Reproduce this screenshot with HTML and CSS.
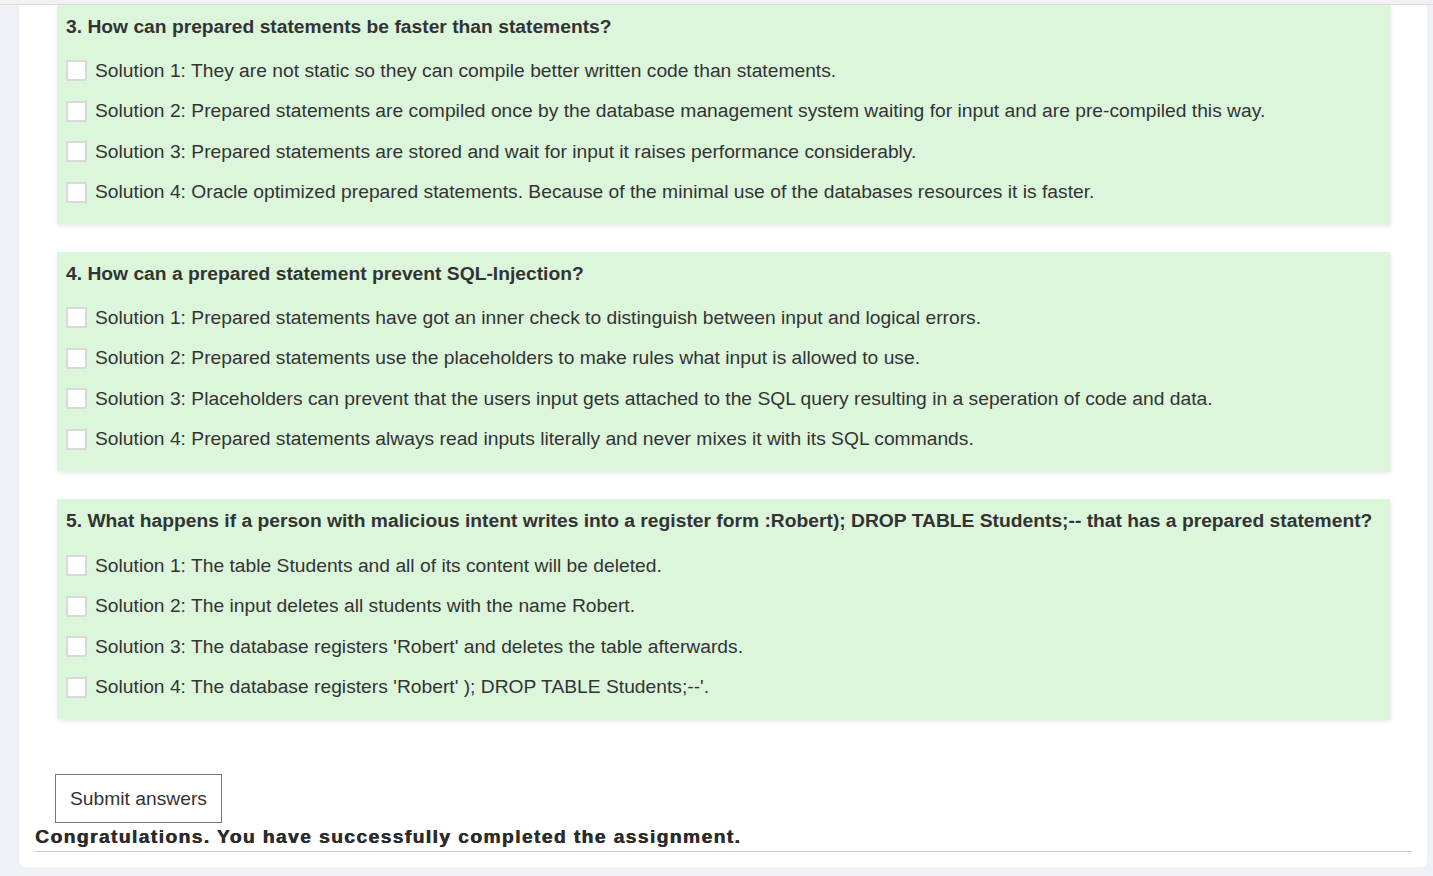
FILE: index.html
```html
<!DOCTYPE html>
<html lang="en">
<head>
<meta charset="utf-8">
<title>Quiz</title>
<link rel="stylesheet" href="styles.css">
</head>
<body>
<div class="topbar"></div>
<main class="card">
  <section class="question">
    <h3 class="q-title">3. How can prepared statements be faster than statements?</h3>
    <label class="option"><span class="box"></span>Solution 1: They are not static so they can compile better written code than statements.</label>
    <label class="option"><span class="box"></span>Solution 2: Prepared statements are compiled once by the database management system waiting for input and are pre-compiled this way.</label>
    <label class="option"><span class="box"></span>Solution 3: Prepared statements are stored and wait for input it raises performance considerably.</label>
    <label class="option"><span class="box"></span>Solution 4: Oracle optimized prepared statements. Because of the minimal use of the databases resources it is faster.</label>
  </section>
  <section class="question">
    <h3 class="q-title">4. How can a prepared statement prevent SQL-Injection?</h3>
    <label class="option"><span class="box"></span>Solution 1: Prepared statements have got an inner check to distinguish between input and logical errors.</label>
    <label class="option"><span class="box"></span>Solution 2: Prepared statements use the placeholders to make rules what input is allowed to use.</label>
    <label class="option"><span class="box"></span>Solution 3: Placeholders can prevent that the users input gets attached to the SQL query resulting in a seperation of code and data.</label>
    <label class="option"><span class="box"></span>Solution 4: Prepared statements always read inputs literally and never mixes it with its SQL commands.</label>
  </section>
  <section class="question q-last">
    <h3 class="q-title">5. What happens if a person with malicious intent writes into a register form :Robert); DROP TABLE Students;-- that has a prepared statement?</h3>
    <label class="option"><span class="box"></span>Solution 1: The table Students and all of its content will be deleted.</label>
    <label class="option"><span class="box"></span>Solution 2: The input deletes all students with the name Robert.</label>
    <label class="option"><span class="box"></span>Solution 3: The database registers 'Robert' and deletes the table afterwards.</label>
    <label class="option"><span class="box"></span>Solution 4: The database registers 'Robert' ); DROP TABLE Students;--'.</label>
  </section>
  <div class="footer">
    <button class="submit" type="button">Submit answers</button>
    <p class="congrats">Congratulations. You have successfully completed the assignment.</p>
  </div>
</main>
</body>
</html>
```
FILE: styles.css
```css
html, body {
  margin: 0;
  padding: 0;
}
body {
  background: #f0f1f7;
  font-family: "Liberation Sans", Arial, sans-serif;
  color: #333;
  height: 876px;
  overflow: hidden;
}
.topbar {
  height: 4px;
  background: #f2f2f4;
  border-bottom: 1px solid #dcdcdc;
}
.card {
  margin: 0 6px 0 19px;
  background: #fff;
  border-radius: 0 0 6px 6px;
  padding: 0 37px 15px 38px;
}
.question {
  background: #dcf6dc;
  box-shadow: 1px 2px 4px rgba(0, 0, 0, 0.1);
  padding: 11px 9px 11.7px;
  margin-bottom: 28px;
}
.q-last {
  margin-bottom: 55px;
}
.q-title {
  margin: 0 0 11.7px;
  font-size: 19.25px;
  line-height: 22px;
  font-weight: bold;
  color: #333;
}
.q-last .q-title {
  margin-bottom: 12.7px;
}
.option {
  display: flex;
  align-items: center;
  box-sizing: border-box;
  height: 40.67px;
  padding-top: 1px;
  font-size: 19.25px;
  color: #333;
}
.box {
  width: 17px;
  height: 17px;
  border: 2px solid #d9d9d9;
  background: #fff;
  margin-right: 8px;
  flex: none;
}
.footer {
  margin-left: -22px;
  margin-right: -22px;
}
.submit {
  display: block;
  margin-left: 20px;
  height: 49px;
  width: 167px;
  border: 1px solid #777;
  background: #fff;
  font-family: "Liberation Sans", Arial, sans-serif;
  font-size: 19.25px;
  color: #333;
  padding: 0 0 0 14px;
  text-align: left;
}
.congrats {
  margin: 0;
  font-size: 19.25px;
  line-height: 28px;
  font-weight: bold;
  letter-spacing: 1.4px;
  text-shadow: 0.6px 0 0 #2b2b2b;
  color: #2b2b2b;
  border-bottom: 1px solid #ccc;
}
```
